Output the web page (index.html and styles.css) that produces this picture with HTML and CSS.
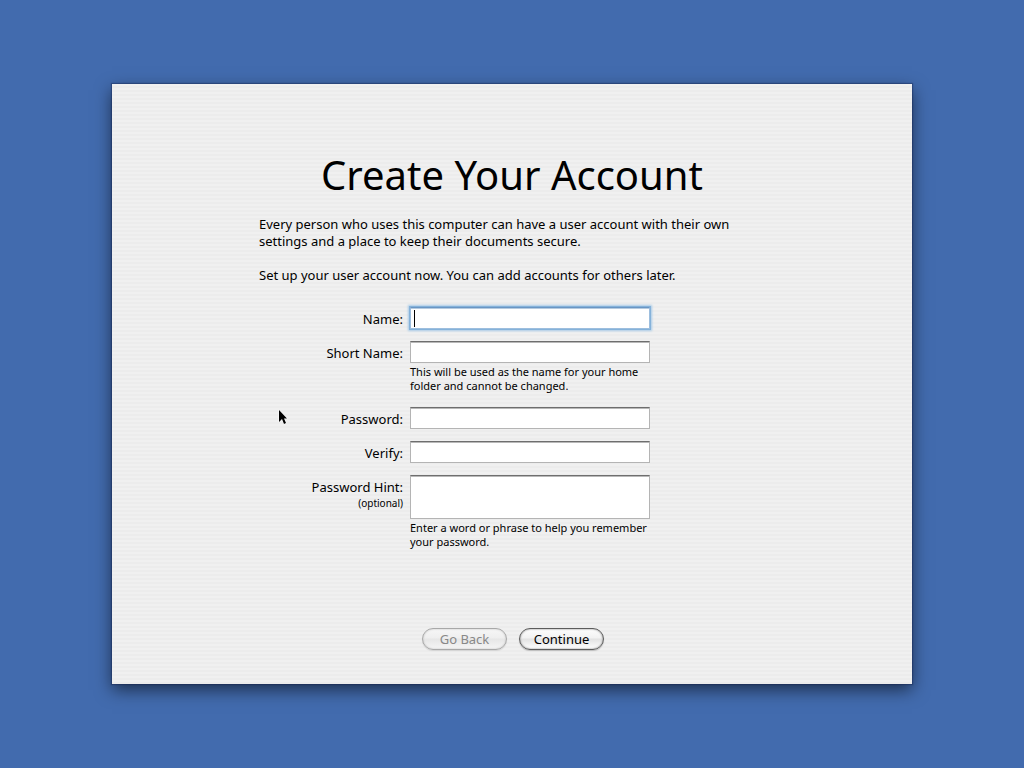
FILE: index.html
```html
<!DOCTYPE html>
<html lang="en">
<head>
<meta charset="utf-8">
<meta name="viewport" content="width=device-width, initial-scale=1">
<title>Create Your Account</title>
<link rel="stylesheet" href="styles.css">
</head>
<body>
<main class="panel">
  <h1 class="title">Create Your Account</h1>
  <div class="intro">
    <p>Every person who uses this computer can have a user account with their own settings and a place to keep their documents secure.</p>
    <p>Set up your user account now. You can add accounts for others later.</p>
  </div>
  <form class="form" id="account">
    <label class="label" for="name">Name:</label>
    <div class="cell cell-active">
      <input class="field field-active" id="name" type="text" autocomplete="off">
      <span class="caret"></span>
    </div>
    <label class="label" for="short">Short Name:</label>
    <div class="cell">
      <input class="field" id="short" type="text" aria-describedby="short-note">
      <p class="note" id="short-note">This will be used as the name for your home folder and cannot be changed.</p>
    </div>
    <label class="label" for="password">Password:</label>
    <div class="cell"><input class="field" id="password" type="password"></div>
    <label class="label" for="verify">Verify:</label>
    <div class="cell"><input class="field" id="verify" type="password"></div>
    <label class="label" for="hint">Password Hint:<small class="optional">(optional)</small></label>
    <div class="cell">
      <textarea class="field field-tall" id="hint" aria-describedby="hint-note"></textarea>
      <p class="note" id="hint-note">Enter a word or phrase to help you remember your password.</p>
    </div>
  </form>
  <div class="actions">
    <button class="button" type="button" disabled>Go Back</button>
    <button class="button" type="submit" form="account">Continue</button>
  </div>
  <svg class="pointer" width="11" height="18" viewBox="0 0 11 18" aria-hidden="true">
    <path d="M1 1v12l3-3 2 5 2-1-2-4.500H9z" fill="#000" stroke="#fff" stroke-width="1" paint-order="stroke"/>
  </svg>
</main>
</body>
</html>
```
FILE: styles.css
```css
* {
  box-sizing: border-box;
}

body {
  margin: 0;
  min-height: 100vh;
  display: flex;
  align-items: center;
  justify-content: center;
  background: #426bae;
  color: #000;
  font: 13px/17px "Noto Sans", "Lucida Grande", sans-serif;
}

p {
  margin: 0;
}

.panel {
  position: relative;
  width: 100%;
  max-width: 800px;
  padding: 63px 24px 34px;
  display: flex;
  flex-direction: column;
  align-items: center;
  background: repeating-linear-gradient(#f0f0f0 0 2px, #ececec 2px 4px);
  box-shadow: 0 0 1px 1px rgba(20, 35, 80, 0.4), 0 6px 16px rgba(0, 0, 0, 0.55);
}

.title {
  margin: 0;
  font-size: 40px;
  line-height: 56px;
  font-weight: 400;
}

.intro {
  width: 100%;
  max-width: 506px;
  margin-top: 13px;
  display: grid;
  gap: 17px;
}

.form {
  width: 100%;
  max-width: 506px;
  margin-top: 23px;
  display: grid;
  grid-template-columns: 144px minmax(0, 248px);
  column-gap: 7px;
  row-gap: 12px;
}

.label {
  padding-top: 4px;
  text-align: right;
}

.optional {
  display: block;
  font-size: 10px;
  line-height: 15px;
}

.cell-active {
  position: relative;
}

.field {
  display: block;
  width: 100%;
  max-width: 240px;
  height: 22px;
  margin: 0;
  padding: 2px 4px;
  border: 1px solid #b4b4b4;
  border-top: 1px solid #6e6e6e;
  border-radius: 0;
  outline: none;
  resize: none;
  background: #fff;
  box-shadow: inset 0 1px 0 #b8b8b8;
  color: inherit;
  font: inherit;
}

.field-active {
  border-color: #6a96c4 #9dbede #9dbede;
  box-shadow: inset 0 1px 0 #b5cbe0, 0 0 0 1px #85b2da, 0 0 2px 2px #a9cbe8;
}

.field-tall {
  height: 44px;
}

.caret {
  position: absolute;
  left: 4px;
  top: 3px;
  width: 1px;
  height: 17px;
  background: #000;
}

.note {
  padding: 2px 0;
  font-size: 11px;
  line-height: 14px;
}

.actions {
  margin-top: 77px;
  padding-left: 2px;
  display: flex;
  gap: 12px;
}

.button {
  min-width: 85px;
  height: 22px;
  padding: 0 12px;
  border: 1px solid #5c5c5c;
  border-radius: 11px;
  background: linear-gradient(#fdfdfd 0, #f2f2f2 45%, #e2e2e2 50%, #fff 100%);
  box-shadow: inset 0 0 2px #777, 0 1px 1px rgba(0, 0, 0, 0.2);
  color: #000;
  font: 13px/18px "Noto Sans", "Lucida Grande", sans-serif;
}

.button:disabled {
  border-color: #a8a8a8;
  background: linear-gradient(#f6f6f6 0, #efefef 45%, #e6e6e6 50%, #f5f5f5 100%);
  box-shadow: inset 0 0 2px #bbb, 0 1px 1px rgba(0, 0, 0, 0.1);
  color: #888;
}

.pointer {
  position: absolute;
  left: 166px;
  top: 325px;
}
```
